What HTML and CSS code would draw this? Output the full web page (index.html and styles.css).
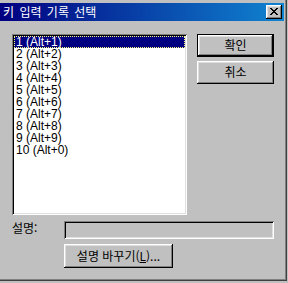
FILE: index.html
```html
<!DOCTYPE html>
<html lang="ko">
<head>
<meta charset="utf-8">
<title>키 입력 기록 선택</title>
<link rel="stylesheet" href="styles.css">
</head>
<body>
<div class="window">
  <div class="titlebar">
    <span class="title">키 입력 기록 선택</span>
    <span class="close">
      <svg width="8" height="7" viewBox="0 0 8 7"><path d="M0 0h2v1h1v1h2v-1h1v-1h2v1h-1v1h-1v1h-1v1h1v1h1v1h1v1h-2v-1h-1v-1h-2v1h-1v1h-2v-1h1v-1h1v-1h1v-1h-1v-1h-1v-1h-1z" fill="#000"/></svg>
    </span>
  </div>
  <div class="content">
    <div class="top-row">
      <div class="listbox">
        <div class="item selected">1 (Alt+1)</div>
        <div class="item">2 (Alt+2)</div>
        <div class="item">3 (Alt+3)</div>
        <div class="item">4 (Alt+4)</div>
        <div class="item">5 (Alt+5)</div>
        <div class="item">6 (Alt+6)</div>
        <div class="item">7 (Alt+7)</div>
        <div class="item">8 (Alt+8)</div>
        <div class="item">9 (Alt+9)</div>
        <div class="item">10 (Alt+0)</div>
      </div>
      <div class="buttons">
        <div class="btn default">확인</div>
        <div class="btn">취소</div>
      </div>
    </div>
    <div class="desc-row">
      <span class="label">설명:</span>
      <div class="edit"></div>
    </div>
    <div class="change-row">
      <div class="btn wide">설명 바꾸기(<u>L</u>)...</div>
    </div>
  </div>
</div>
</body>
</html>
```
FILE: styles.css
```css
html, body {
  margin: 0;
  padding: 0;
  background: #c0c0c0;
  width: 288px;
  height: 283px;
  overflow: hidden;
  font-family: "Liberation Sans", "Noto Sans CJK KR", sans-serif;
  font-size: 12px;
  color: #000;
}

.window {
  width: 287px;
  height: 281px;
  box-sizing: border-box;
  border-right: 1px solid #404040;
  border-bottom: 1px solid #404040;
  box-shadow: inset -1px -1px #808080;
  padding-top: 3px;
}

.titlebar {
  height: 18px;
  margin-right: 2px;
  background: linear-gradient(to right, #000080, #1084d0);
  display: flex;
  align-items: center;
  justify-content: space-between;
  padding: 0 2px 0 3px;
}

.title {
  color: #fff;
  font-family: "Noto Sans CJK KR", sans-serif;
  font-size: 12px;
  line-height: 14px;
  word-spacing: 2px;
}

.close {
  width: 16px;
  height: 14px;
  box-sizing: border-box;
  background: #c0c0c0;
  box-shadow: inset -1px -1px #000, inset 1px 1px #fff, inset -2px -2px #808080, inset 2px 2px #dfdfdf;
  display: flex;
  align-items: center;
  justify-content: center;
  padding: 0 1px 1px 0;
}

.close svg { display: block; }

.content {
  padding: 13px 0 0 12px;
}

.top-row {
  display: flex;
  gap: 10px;
}

.listbox {
  width: 175px;
  height: 181px;
  box-sizing: border-box;
  background: #fff;
  padding: 2px;
  box-shadow: inset 1px 1px #808080, inset -1px -1px #fff, inset 2px 2px #000, inset -2px -2px #dfdfdf;
}

.item {
  height: 12px;
  line-height: 12px;
  padding-left: 2px;
  white-space: nowrap;
}

.item.selected {
  background: #000080;
  color: #fff;
  outline: 1px dotted #ffff80;
  outline-offset: -1px;
}

.buttons {
  display: flex;
  flex-direction: column;
  gap: 4px;
}

.btn {
  width: 77px;
  height: 23px;
  box-sizing: border-box;
  background: #c0c0c0;
  box-shadow: inset -1px -1px #000, inset 1px 1px #fff, inset -2px -2px #808080, inset 2px 2px #dfdfdf;
  display: flex;
  align-items: center;
  justify-content: center;
  font-family: "Noto Sans CJK KR", sans-serif;
  font-size: 12px;
  line-height: 14px;
  padding-bottom: 1px;
}

.btn.default {
  border: 1px solid #000;
}

.desc-row {
  display: flex;
  margin-top: 6px;
}

.label {
  width: 52px;
  font-family: "Noto Sans CJK KR", sans-serif;
  font-size: 12px;
  line-height: 12px;
  margin-top: 1px;
}

.edit {
  width: 210px;
  height: 18px;
  box-sizing: border-box;
  background: #c0c0c0;
  box-shadow: inset 1px 1px #808080, inset -1px -1px #fff, inset 2px 2px #000, inset -2px -2px #dfdfdf;
}

.change-row {
  margin-top: 5px;
  padding-left: 52px;
}

.btn.wide {
  width: 109px;
  height: 24px;
}

.btn.wide u {
  text-decoration: underline;
  text-underline-offset: 1px;
}
```
